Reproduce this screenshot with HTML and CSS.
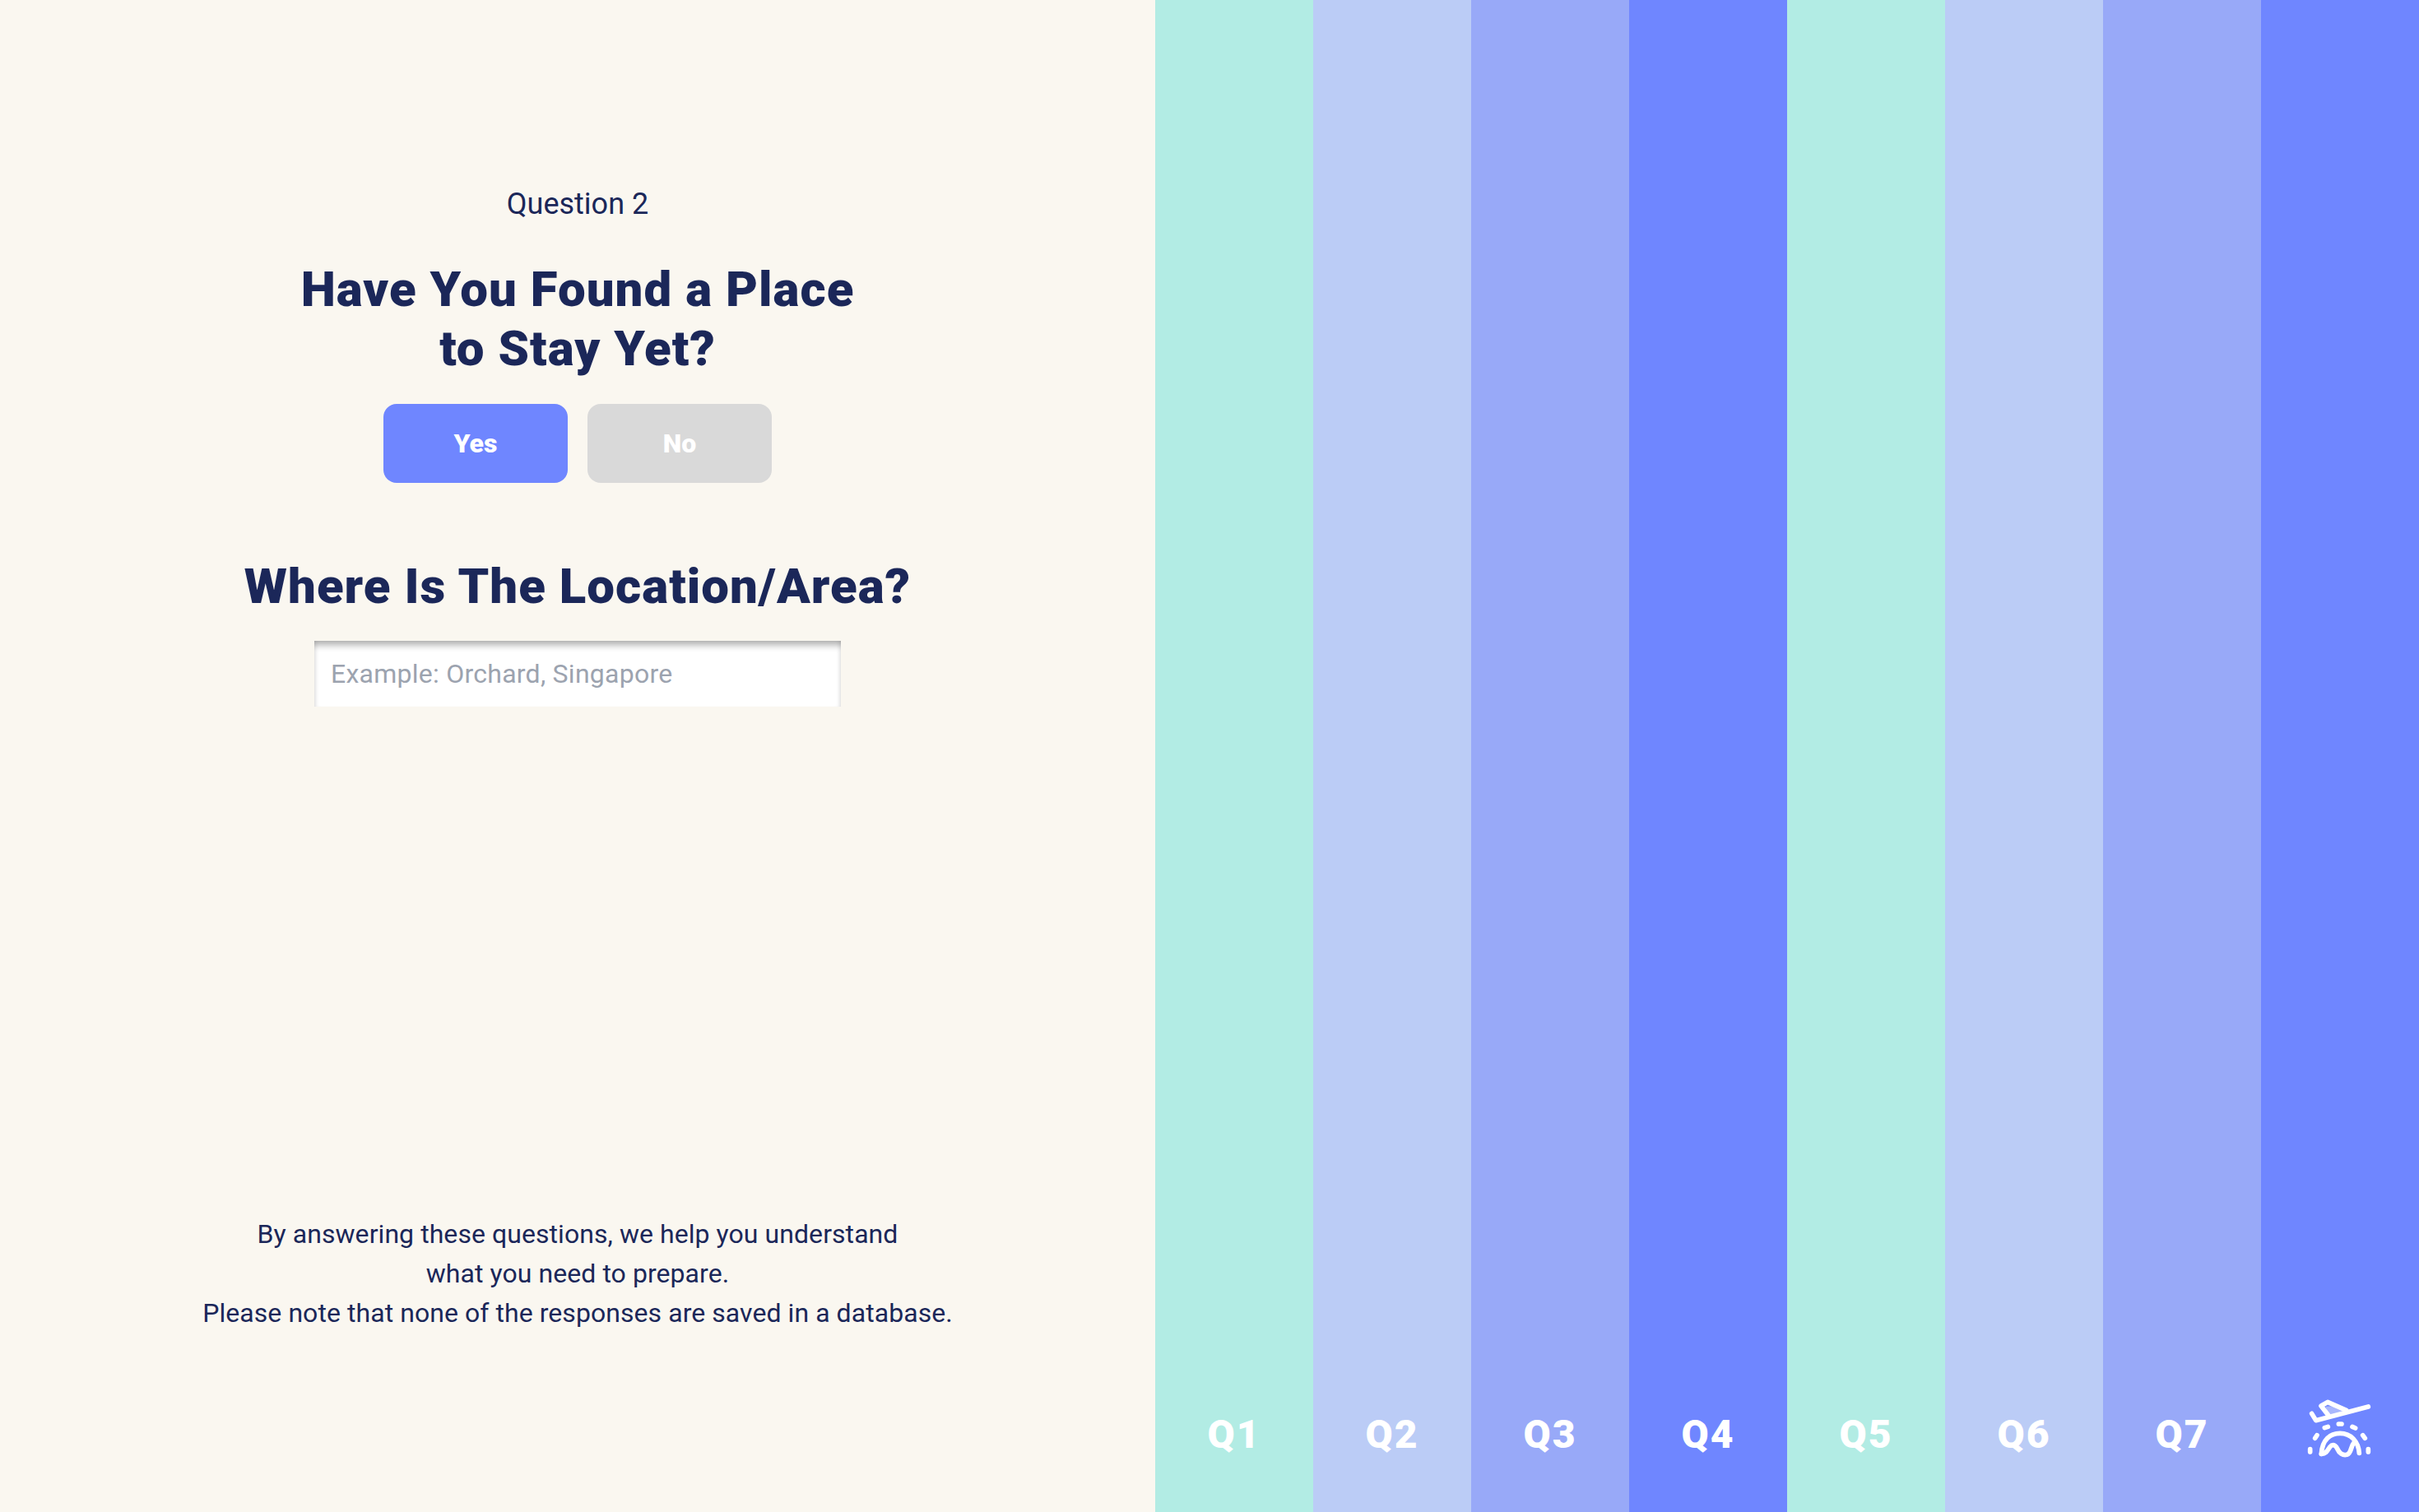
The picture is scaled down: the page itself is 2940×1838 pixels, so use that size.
FILE: index.html
```html
<!DOCTYPE html>
<html lang="en">
<head>
<meta charset="utf-8">
<title>Question 2</title>
<link rel="stylesheet" href="styles.css">
</head>
<body>
<main class="app">
  <section class="panel">
    <p class="eyebrow">Question 2</p>
    <h1 class="title title-first">Have You Found a Place<br>to Stay Yet?</h1>
    <div class="choices">
      <button class="choice choice-on">Yes</button>
      <button class="choice choice-off">No</button>
    </div>
    <h2 class="title title-second">Where Is The Location/Area?</h2>
    <input class="field" type="text" placeholder="Example: Orchard, Singapore">
    <p class="note">By answering these questions, we help you understand<br>what you need to prepare.<br>Please note that none of the responses are saved in a database.</p>
  </section>
  <nav class="tabs">
    <div class="tab teal"><span class="tab-label">Q1</span></div>
    <div class="tab pale"><span class="tab-label">Q2</span></div>
    <div class="tab mid"><span class="tab-label">Q3</span></div>
    <div class="tab deep"><span class="tab-label">Q4</span></div>
    <div class="tab teal"><span class="tab-label">Q5</span></div>
    <div class="tab pale"><span class="tab-label">Q6</span></div>
    <div class="tab mid"><span class="tab-label">Q7</span></div>
    <div class="tab deep"><span class="tab-label">
      <svg class="logo" viewBox="0 0 390 390" fill="none" stroke="#fff" stroke-width="17" stroke-linecap="round" stroke-linejoin="round">
        <path d="M142 92L190 90L208 112L152 124Z" fill="#a9b7fd" stroke="none"/>
        <path d="M298 93L107 143L92 118"/>
        <path d="M152 124L126 90L150 76L218 106"/>
        <path d="M139 170L151 166M190 156H201M240 166L251 171M104 208L111 197M278 197L286 208M86 248V258M298 248V258"/>
        <path d="M127 265C130 212 160 190 195 190C235 190 262 220 265 262"/>
        <path d="M127 265C146 266 150 250 158 240C168 228 178 232 185 246C192 262 205 272 220 268C238 262 232 240 246 224"/>
      </svg>
    </span></div>
  </nav>
</main>
</body>
</html>
```
FILE: styles.css
```css
* { box-sizing: border-box; }
html, body { margin: 0; height: 100%; }
body { font-family: Roboto, "Liberation Sans", sans-serif; color: #1b2759; background: #faf7f0; }
.app { display: grid; grid-template-columns: 1404px 1fr; height: 1838px; }
.panel { display: flex; flex-direction: column; align-items: center; padding: 224px 0 218px; text-align: center; }
.eyebrow { margin: 0; font-size: 36px; line-height: 48px; }
.title { margin: 0; font-size: 60px; line-height: 72px; font-weight: 900; letter-spacing: 1px; }
.title-first { margin-top: 44px; }
.title-second { margin-top: 90px; }
.choices { display: flex; gap: 24px; margin-top: 31px; }
.choice { width: 224px; height: 96px; border: 0; border-radius: 16px; color: #fff; font: 900 32px Roboto, sans-serif; }
.choice-on { background: #6f86ff; }
.choice-off { background: #d9d9d9; }
.field { width: 640px; height: 80px; margin-top: 30px; padding: 0 20px; border: 0; background: #fff; box-shadow: inset 0 10px 8px -5px rgba(0,0,0,.32), inset 5px 0 5px -3px rgba(0,0,0,.09), inset -5px 0 5px -3px rgba(0,0,0,.09); font: 400 32px Roboto, sans-serif; letter-spacing: .25px; color: #1b2759; }
.field::placeholder { color: #9ca3af; opacity: 1; }
.note { margin: auto 0 0; font-size: 32px; line-height: 48px; letter-spacing: .06px; }
.tabs { display: grid; grid-template-columns: repeat(8, 1fr); }
.tab { display: flex; flex-direction: column; justify-content: flex-end; align-items: center; padding-bottom: 64px; color: #fff; }
.tab-label { display: flex; align-items: center; justify-content: center; height: 60px; font-size: 48px; font-weight: 900; line-height: 60px; letter-spacing: 2px; }
.logo { flex: none; width: 130px; height: 130px; }
.teal { background: #b2ece4; }
.pale { background: #bbccf6; }
.mid { background: #98a9f8; }
.deep { background: #6f86ff; }
```
